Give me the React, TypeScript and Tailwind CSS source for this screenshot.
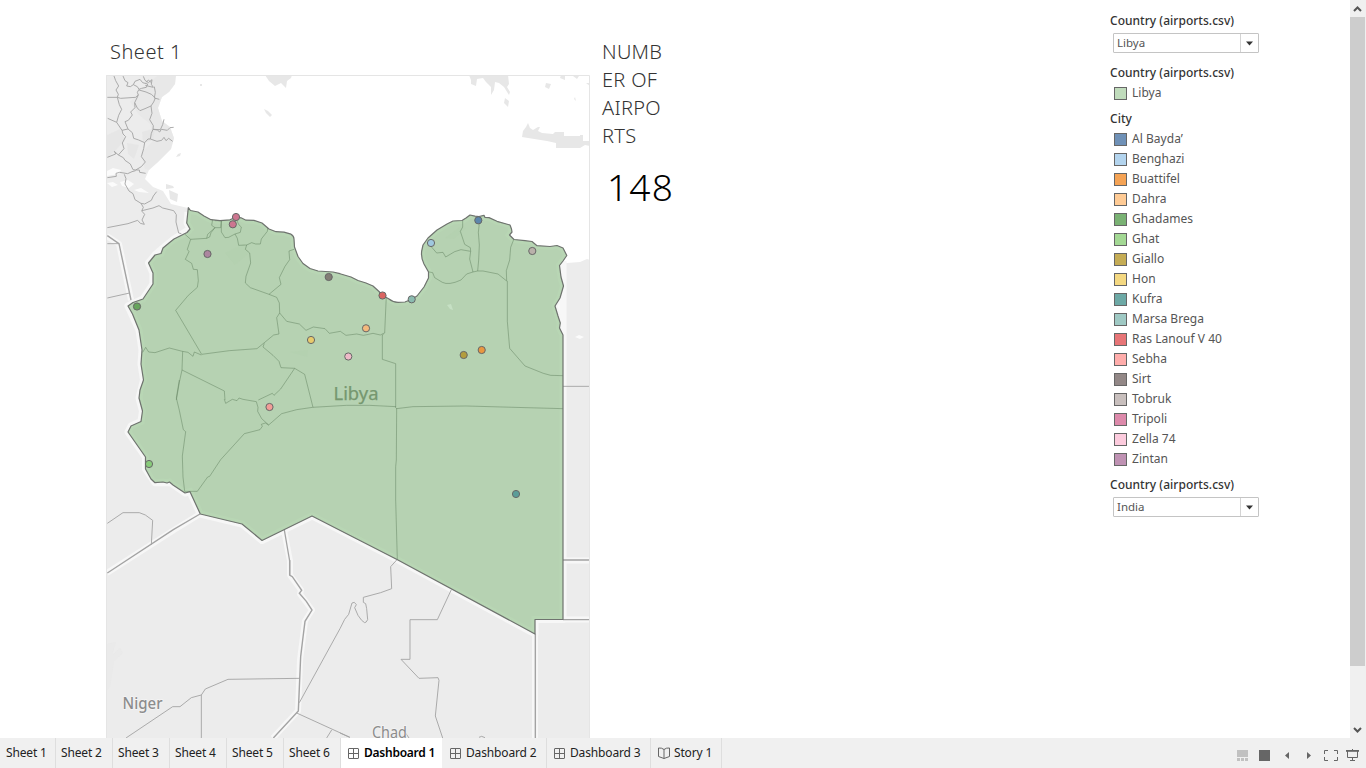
import React from "react";

const cities: [string, string][] = [
  ["Al Bayda’", "#6f91b7"],
  ["Benghazi", "#b3d4ee"],
  ["Buattifel", "#f5a355"],
  ["Dahra", "#ffcb95"],
  ["Ghadames", "#7ab274"],
  ["Ghat", "#a3d894"],
  ["Giallo", "#c5ac55"],
  ["Hon", "#f4d881"],
  ["Kufra", "#6da9a6"],
  ["Marsa Brega", "#9fc9c4"],
  ["Ras Lanouf V 40", "#e77577"],
  ["Sebha", "#ffadab"],
  ["Sirt", "#938887"],
  ["Tobruk", "#c8bfbd"],
  ["Tripoli", "#dd8aab"],
  ["Zella 74", "#fccbdd"],
  ["Zintan", "#bf92b3"],
];

const airports: [number, number, string][] = [
  [236, 217, "#cd7690"],
  [232.8, 224.3, "#cd7690"],
  [207.5, 254, "#ac869f"],
  [137, 306.5, "#66a55c"],
  [149, 464, "#88cb7a"],
  [269.5, 407, "#f29d97"],
  [311, 340, "#e8ca6c"],
  [348.3, 356.5, "#eebbc8"],
  [366, 328.3, "#f4b97d"],
  [328.7, 277, "#827d75"],
  [382.5, 295.5, "#da6461"],
  [411.7, 299.3, "#8bbbb0"],
  [431, 243, "#9fc8df"],
  [478.3, 220.3, "#5c86ac"],
  [532.3, 251, "#b9b1aa"],
  [463.7, 355, "#b39d3e"],
  [481.7, 350, "#e99740"],
  [516, 494, "#5b9d98"],
];

const libya =
  "M188.3 207.7L190.5 210.5L198 212L204 216L211 219.7L220 220.6L230 219.8L236 217L241 217.8L246 220.2L254 220.4L262 223L269 229L276 231.7L284 232.2L291 234.2Q294 236 294 239L294.5 247L298 256.5L303 263.5L310 268.5L318 271L333 272L340 273.7L351 277L358 280.5L366 283L373 286L379 291.5L382 295L389 299Q393 302.3 398 302.4L405 302L412 299L417 296L424 287L428.5 278L428.5 272L424 264Q420.8 258 421.7 251L423 245L428 238L437 230L447 224L453 221L462 220.5L466 218L470 215L475 216.2L479 216.5L484 215.3L485 217.4L489 217.6L497 221.3L510 225L511.5 229L512 232L509.5 235L514 239.5L525 240.7L532 241.5L537 245.7L550 246.5L557 245.5L563 248L566.8 255.5L563 261L559.5 265.5L561 277L563.5 286L560 298L555 306L558 316L560.3 323L559.5 328L563 335V619.5H535V634L397 559.5L312 516L262 540.5L242 524L200.3 514L190 491.7L185 493L179 489L173 485L169.5 482L167 483L163 482L155 482.7L151 479L145.5 469V457L128 432L131 426L141 421.5L142.5 411L139 398L140 390L143.5 380L141 364L142 350L139 330L132.5 314L128 306L133 302.5L143 299L153 284L153 273L148.5 263L155 255L161 253.5L163 248L169 243L174 239L187 232.5L190 229L186.7 223Z";

function LandShapes() {
  return (
    <>
      <path fill="#ececec" d="M106 75H176L175 84L169 92L162 97L158 108L162 121L170 127L174 138L171 149L158 162L149 170L145 179L153 187L163 191L171 204L188 208L200 480L312 500L563 600V261L567 263L580 262L587 259L590 260V738H106Z" />
      <path fill="#e5e5e5" d="M158 75H176L175 84L169 92L162 97L158 108L162 121L170 127L174 138L171 149L158 162L149 170L145 169L141 153L153 141L150 124L139 115L130 102L140 90Z" opacity=".55" />
      <path fill="#e1e1e1" opacity=".45" d="M107 135L120 129L125 140L116 150L107 158ZM142 132L155 128L153 140L143 143ZM127 143L139 145L134 159L128 154Z" />
      <g fill="#e7e7e7">
        <path d="M265 75L269 81L275 86L281 83L286 88L287 81L291 78L292 75Z" />
        <path d="M264 109L266 113L270 117L272 115L268 111ZM200 84L202 84L202 86L200 86ZM178 154L181 153L180 156L176 157ZM166 184L173 186L174 188L166 189ZM169 190L178 194L177 202L170 199Z" />
        <path d="M469 75L471 80V84L476 86L477 79L483 78L486 82L491 87L491 95L494 90L495 82L499 83L504 87L509 95L510 92L507 87L509 84L508 75ZM505 98L509 101L508 107L504 103ZM561 75L565 76L565 80L560 78ZM546 83L551 84L549 89L545 87ZM573 76H579L577 79ZM575 97L576 101L574 99ZM586 83H590V86Z" />
        <path d="M523 131L526 127L528 123L530 128L533 130L538 127L540 127L538 131L542 133L553 134L555 132H564V136H580V135H583V141L590 141V146L585 145L580 148H556V143L547 141L522 137Z" />
      </g>
      <g fill="#fff" opacity=".8">
        <path d="M107 183L113 182L118 185L112 187ZM120 182L128 180L134 184L129 188L122 186ZM134 190L141 188L149 193L139 192ZM113 168L121 170L119 174L107 176V171Z" />
        <path d="M575 337L579 335L584 337L580 339Z" />
      </g>
      <path fill="#e8e8e8" d="M107 644L116 642L112 655L120 648L123 653L114 661L110 687L107 690Z" opacity=".5" />
    </>
  );
}

function RegionLines() {
  return (
    <g fill="none" stroke="#a3a3a3" strokeWidth=".9">
      <g transform="translate(100 70) scale(.33333)" className="[&>path]:[vector-effect:non-scaling-stroke]">
        <path d="M42 18L47 32L56 48L48 60L55 73L52 82L22 82M69 18L75 32L84 38L80 48L91 50L100 44L112 50L117 58L112 67L115 75L107 82L62 85L52 82M52 82L58 104L65 118L56 136L50 157L23 145" />
        <path d="M100 44L105 34L120 28L128 38L143 42L139 52L125 55L117 58M130 19L135 31L145 38L156 29L154 43L160 52L147 49L136 46M139 37L145 30L153 37M117 60L138 66L154 73L166 84L161 96L153 108L135 116L120 122L112 114L104 98L115 75M163 50L166 67L163 84L178 88" />
        <path d="M104 98L105 113L92 126L97 135L85 151L75 155L84 177L66 181L50 157M84 177L97 188L101 205L116 210L134 218L144 207L151 207M66 181L69 192L77 200L67 219L72 236L55 255L43 244L47 252L22 262" />
        <path d="M153 108L156 130L149 149L160 167L159 178L181 179L188 164L192 148M159 178L154 190L151 207M159 178L172 180L179 186L184 178L202 181L210 173L221 172M151 207L171 214L185 211L192 202L198 212L206 205L218 214" />
        <path d="M134 218L131 236L124 260L136 276L124 290L107 300L99 299L91 282L75 271L70 263L55 255M107 300L118 300L119 307L137 310M107 302L96 305L83 311L59 307L48 310L49 319L22 323" />
        <path d="M73 313L78 326L75 342L87 363L99 371L105 389L123 400L134 402L154 391L160 378L170 365M123 400L130 412L125 423L134 433L126 450L133 463L121 460L113 451L84 461L22 473M126 422L159 414L177 407L188 414L221 422L229 434L228 456L236 489L244 491" />
        <path strokeWidth="1.4" d="M22 497L57 521L93 690" />
        <path d="M22 521H57M22 684L89 669" />
      </g>
      <g transform="translate(100 380) scale(.33333)" className="[&>path]:[vector-effect:non-scaling-stroke]">
        <path d="M22 430L69 398L118 398L136 405L158 421L154 494" />
        <path strokeWidth="1.3" d="M300 402L220 449L22 579M553 450L569 543V585" />
      </g>
      <g transform="translate(100 560) scale(.33333)" className="[&>path]:[vector-effect:non-scaling-stroke]">
        <path strokeWidth="1.4" d="M569 0V45L577 50L605 91L598 100L619 124L636 150L615 184L608 240L602 290L595 453L520 534" />
        <path d="M598 355L384 358L316 387L304 405L274 413L240 440H218L78 534M304 405V534M598 428L720 206M590 459L750 532M695 510L680 534" />
      </g>
      <g transform="translate(340 560) scale(.33333)" className="[&>path]:[vector-effect:non-scaling-stroke]">
        <path d="M170 0L152 20L155 86L122 98L70 112V127L77 131L80 146L83 179Q78 189 74 188L65 181L54 166L44 143L49 134L43 127L36 129L26 163L14 178L0 206M334 89L292 179H210V298H183L237 355L294 353L297 361L286 468L308 534M0 519L29 532M196 518L207 534M417 532L425 529L435 533" />
        <path strokeWidth="1.4" d="M669 0H747M669 179H747M586 221V534" />
        <path d="M669 -521H747" />
      </g>
    </g>
  );
}

function LibyaLines() {
  return (
    <g fill="none" stroke="#5e7f5c" strokeOpacity=".6" strokeWidth=".8">
      <g transform="translate(100 200) scale(.33333)" className="[&>path]:[vector-effect:non-scaling-stroke]">
        <path d="M255 103L272 118L320 115L323 103L345 83L335 76L338 58M320 115L329 111L333 98L345 83H362L364 62H345M364 62V96L375 113L386 112L405 102L421 97L424 81L417 75L409 58" />
        <path d="M272 118L262 148L267 155L256 178L275 190L280 208L292 209L295 242L292 262L265 286L227 331L305 463L388 452L471 446L521 405L537 402L530 353L539 339L538 309L530 292L507 283L451 263L436 249L438 229L452 189L449 159L436 148L440 135L416 136L412 115L405 102M440 135L455 128L467 132H481L484 117L502 94L503 83" />
        <path d="M507 283L543 253L538 233L555 199L569 179L567 153L582 148M539 339L560 364L598 372L618 391L640 381L675 386L688 400L721 394L738 406L770 402L790 406L801 404L819 400L841 405L851 400" />
        <path d="M128 457L137 442L146 456L165 458L208 444L247 454L264 457L279 469L283 456L304 465M248 454L246 510L238 547L229 600M246 510L373 573L375 600M493 430L489 441L519 466L537 484L543 503L584 505L614 523L639 622M584 505L542 567L522 586L517 580L475 600" />
      </g>
      <g transform="translate(100 380) scale(.33333)" className="[&>path]:[vector-effect:non-scaling-stroke]">
        <path d="M238 0L229 54L238 91L250 149L257 155L247 228L249 291L254 334L292 334L323 291L329 289L362 239L433 161L480 149L487 139L484 133L496 129L506 135L545 101L590 89L638 82L740 76L808 76L888 80M373 58L377 70L397 58L411 62L417 54L429 58L469 65M469 65L474 82L473 94L485 116L506 135" />
      </g>
      <g transform="translate(340 200) scale(.33333)" className="[&>path]:[vector-effect:non-scaling-stroke]">
        <path d="M139 287L134 399L127 405V478L167 491V623L170 626L169 780L167 800V900L172 1080" />
        <path d="M272 138L290 159L309 157L317 171L344 155L363 149L392 154L389 177L399 216L380 222L363 240Q326 257 307 247L284 233L278 218L263 215M368 62V81L361 94L374 133L391 143L392 154M418 70L415 97L418 135L416 180L413 213L399 216M413 213L429 213L474 222L500 243L499 212L509 180L512 142L521 119M502 243V364L509 445L555 498L610 520L632 526L669 527" />
        <path d="M169 626L219 620L378 618L669 626" />
      </g>
      <path fill="#c6e0c4" stroke="none" d="M447 305L451 304L453 310L450 309Z" />
    </g>
  );
}

function MapView() {
  return (
    <svg width="484" height="663" viewBox="106 75 484 663" className="block font-['Noto_Sans',sans-serif]">
      <defs>
        <clipPath id="land"><path d={libya} /></clipPath>
      </defs>
      <rect x="106" y="75" width="484" height="663" fill="#fff" />
      <LandShapes />
      <g fill="none" stroke="#f7f7f7" strokeLinejoin="round">
        <path strokeWidth="7" d="M563 261V619.5H535V634L397 559.5L312 516L262 540.5L242 524L200.3 514L190 491.7L185 493L170 482.5L155 482.7L145.5 469V457L128 432L131 426L141 421.5L142.5 411L139 398L143.5 380L141 364L142 350L139 330L128 306L143 299L153 284V273L148.5 263L155 255L163 248L174 239L190 229L187 223L188 212" />
        <path strokeWidth="6" d="M560 265L563 286L555 306L563 335M107 573L174 530L200 514M284 530L290 561V575L301 590L300 594L312 610L305 621L300 660L298 711L273 738M107 236L119 244L131 300M535 634V738M563 560.5H590M563 619.5H590" />
      </g>
      <RegionLines />
      <path d={libya} fill="#b6d2b2" />
      <g clipPath="url(#land)">
        <path d={libya} fill="none" stroke="#b8d6b4" strokeWidth="7" />
        <path d="M225 253L244 244L249 253L235 265ZM290 352L308 350L307 357ZM445 238L461 226L466 228L454 239Z" fill="#aecbab" opacity=".2" />
        <LibyaLines />
      </g>
      <path d={libya} fill="none" stroke="#6f736f" strokeWidth="1.2" strokeLinejoin="round" />
      <text x="333.5" y="400" fontSize="17.5" textLength="45" lengthAdjust="spacingAndGlyphs" fill="#75976f" stroke="#75976f" strokeWidth=".25">Libya</text>
      <text x="122.5" y="708.5" fontSize="15.5" textLength="40" lengthAdjust="spacingAndGlyphs" fill="#8c8c8c" stroke="#f5f5f5" strokeWidth="1.5" paintOrder="stroke" className="font-medium">Niger</text>
      <text x="372" y="738" fontSize="15.5" textLength="35" lengthAdjust="spacingAndGlyphs" fill="#8c8c8c" stroke="#f5f5f5" strokeWidth="1.5" paintOrder="stroke">Chad</text>
      <g stroke="#676767" strokeWidth="1">
        {airports.map(([x, y, color], i) => (
          <circle key={i} cx={x} cy={y} r="3.6" fill={color} />
        ))}
      </g>
      <path d="M106.5 738V75.5H589.5V738" fill="none" stroke="#e5e5e5" />
    </svg>
  );
}

function Swatch({ label, color }: { label: string; color: string }) {
  return (
    <div className="flex h-5 items-center pl-1 text-[12px] tracking-[0.03px] text-[#555]">
      <span className="mr-[5px] h-[13px] w-[13px] border border-[#666]" style={{ backgroundColor: color }} />
      {label}
    </div>
  );
}

function Filter({ value }: { value: string }) {
  return (
    <div className="ml-[3px] flex h-5 w-[146px] rounded-[1px] border border-[#c4c4c4] text-[11.5px] leading-[18px] text-[#555]">
      <span className="flex-1 pl-[3px]">{value}</span>
      <span className="flex w-[18px] items-center border-l border-[#d4d4d4] pl-[5px]">
        <svg width="8" height="5"><path d="M0 .5H7L3.5 4.5Z" fill="#333" /></svg>
      </span>
    </div>
  );
}

const label = "h-5 text-[12px] leading-5 font-medium tracking-[0.03px] text-[#333] whitespace-nowrap";

function GridIcon() {
  return (
    <svg width="11" height="11" className="mr-[5px] shrink-0" fill="none" stroke="#666">
      <rect x=".5" y=".5" width="10" height="10" rx=".5" /><path d="M5.5 0V11M0 5.5H11" />
    </svg>
  );
}

function StoryIcon() {
  return (
    <svg width="12" height="12" className="mr-1 shrink-0" fill="none" stroke="#666">
      <path d="M.5 1V9.5L6 11.5L11.5 9.5V1L8.5 1.2L6 2.5L3.5 1.2ZM6 2.5V11.5" />
    </svg>
  );
}

function TabBar() {
  return (
    <footer className="flex h-[30px] shrink-0 bg-[#f0f0f0] text-[12px] tracking-[-0.15px] whitespace-nowrap text-[#222]">
      {["Sheet 1", "Sheet 2", "Sheet 3", "Sheet 4", "Sheet 5", "Sheet 6"].map((name, i) => (
        <div key={name} className={`flex items-center border-r border-[#dedede] ${i === 0 ? "w-14 pl-1.5" : "w-[57px] pl-[5px]"}`}>{name}</div>
      ))}
      <div className="flex w-[101px] items-center bg-white pl-[7px] font-semibold tracking-[-0.25px] text-black"><GridIcon />Dashboard 1</div>
      <div className="flex w-[105px] items-center border-r border-[#dedede] pl-2"><GridIcon />Dashboard 2</div>
      <div className="flex w-[104px] items-center border-r border-[#dedede] pl-[7px]"><GridIcon />Dashboard 3</div>
      <div className="flex w-[71px] items-center border-r border-[#dedede] pl-[7px]"><StoryIcon />Story 1</div>
      <svg width="134" height="30" viewBox="1232 738 134 30" className="ml-auto">
        <path fill="#c1c1c1" d="M1237 750H1248V757H1237ZM1237 758H1240V761H1237ZM1241 758H1244V761H1241ZM1245 758H1248V761H1245Z" />
        <path fill="#666" d="M1259 750H1270V761H1259ZM1289 752V759L1285 755.5ZM1307 752V759L1311 755.5Z" />
        <g fill="none" stroke="#666">
          <path d="M1328 750.5H1324.5V754M1324.5 757V760.5H1328M1334 750.5H1337.5V754M1337.5 757V760.5H1334" />
          <path d="M1346 750.5H1359M1346 751.3H1359M1347.5 751V757.5H1357.5V751M1352.5 749V751M1352.5 758V760.5M1350 760.5H1355" />
        </g>
      </svg>
    </footer>
  );
}

export default function App() {
  return (
    <div className="flex h-screen w-full flex-col overflow-hidden bg-white font-['Noto_Sans',sans-serif]">
      <main className="flex min-h-0 flex-1 overflow-hidden">
        <section className="ml-[106px] w-[484px] shrink-0 pt-[38px]">
          <h1 className="h-[37px] pl-1 text-[20px] leading-7 font-light tracking-[0.5px] text-[#333]">Sheet 1</h1>
          <MapView />
        </section>
        <section className="ml-3 w-[80px] shrink-0 pt-[38px] text-[#333]">
          <h2 className="text-[20px] leading-7 font-light tracking-[0.3px]">
            {["NUMB", "ER OF", "AIRPO", "RTS"].map((line) => <span key={line} className="block">{line}</span>)}
          </h2>
          <div className="mt-[15px] pl-[5px] text-[37px] leading-[44px] font-light tracking-[1.2px] text-black">148</div>
        </section>
        <aside className="ml-auto w-[240px] shrink-0 pt-[11px]">
          <div className={label}>Country (airports.csv)</div>
          <div className="mt-0.5"><Filter value="Libya" /></div>
          <div className={`mt-2.5 ${label}`}>Country (airports.csv)</div>
          <Swatch label="Libya" color="#c0dcbc" />
          <div className={`mt-1.5 ${label}`}>City</div>
          {cities.map(([name, color]) => <Swatch key={name} label={name} color={color} />)}
          <div className={`mt-1.5 ${label}`}>Country (airports.csv)</div>
          <div className="mt-0.5"><Filter value="India" /></div>
        </aside>
        <div className="flex w-4 shrink-0 flex-col bg-[#f0f0f0]">
          <svg width="15" height="17" fill="none" stroke="#555" strokeWidth="2"><path d="M4 11L7.5 7.5L11 11" /></svg>
          <div className="h-[649px] w-[15px] bg-[#cdcdcd]" />
          <svg width="15" height="17" className="mt-auto" fill="none" stroke="#555" strokeWidth="2"><path d="M4 7L7.5 10.5L11 7" /></svg>
        </div>
      </main>
      <TabBar />
    </div>
  );
}
